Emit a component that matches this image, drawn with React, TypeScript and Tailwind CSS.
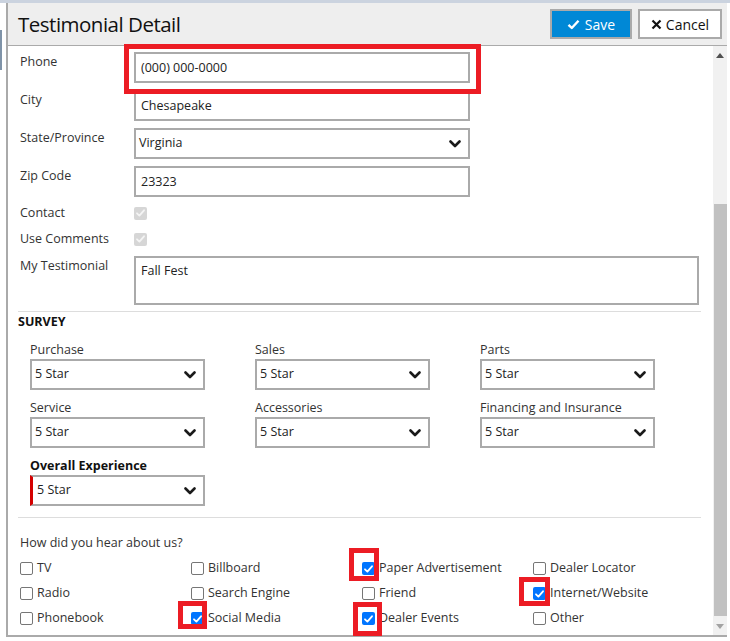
import React from "react";

const font = { fontFamily: '"Open Sans", "Noto Sans", sans-serif' };

function Chevron() {
  return (
    <svg width="12" height="8" viewBox="0 0 12 8" className="shrink-0">
      <path d="M1.5 1.5 L6 6 L10.5 1.5" fill="none" stroke="#1a1a1a" strokeWidth="2.6" strokeLinecap="round" strokeLinejoin="round" />
    </svg>
  );
}

function Check({ color = "white" }: { color?: string }) {
  return (
    <svg width="9" height="8" viewBox="0 0 9 8">
      <path d="M1 4.3 L3.4 6.6 L8 1.3" fill="none" stroke={color} strokeWidth="1.8" strokeLinecap="round" strokeLinejoin="round" />
    </svg>
  );
}

function Box({ checked }: { checked?: boolean }) {
  if (checked)
    return (
      <span className="w-[13px] h-[13px] rounded-[2px] bg-[#0075ff] flex items-center justify-center shrink-0">
        <Check />
      </span>
    );
  return <span className="w-[13px] h-[13px] rounded-[2px] border border-[#767676] bg-white shrink-0" />;
}

function DisabledBox() {
  return (
    <span className="w-[13px] h-[13px] rounded-[2px] bg-[#d6d6d6] flex items-center justify-center">
      <Check color="#f4f4f4" />
    </span>
  );
}

function Field({ label, children }: { label: string; children: React.ReactNode }) {
  return (
    <div className="flex items-start mb-[7px]">
      <div className="w-[114px] pt-[1px] text-[12.5px] text-[#333] leading-[18px]">{label}</div>
      {children}
    </div>
  );
}

function Input({ value, w = 336 }: { value: string; w?: number }) {
  return (
    <div className="h-[31px] border-2 border-[#aaa] flex items-center px-[5px] pt-[1px] text-[12.5px] text-[#222]" style={{ width: w }}>
      {value}
    </div>
  );
}

function Select({ value, w = 175, red }: { value: string; w?: number; red?: boolean }) {
  return (
    <div
      className={`h-[31px] border-2 border-[#aaa] flex items-center justify-between pr-[7px] text-[12.5px] text-[#222] ${red ? "border-l-[3px] border-l-[#d40000] pl-[4px]" : "pl-[3px]"}`}
      style={{ width: w }}
    >
      <span>{value}</span>
      <Chevron />
    </div>
  );
}

function SurveyItem({ label, bold, red }: { label: string; bold?: boolean; red?: boolean }) {
  return (
    <div className="w-[175px]">
      <div className={`text-[12.5px] leading-[19px] ${bold ? "font-bold text-[#111]" : "text-[#333]"}`}>{label}</div>
      <Select value="5 Star" red={red} />
    </div>
  );
}

const hear: [string, boolean][][] = [
  [["TV", false], ["Billboard", false], ["Paper Advertisement", true], ["Dealer Locator", false]],
  [["Radio", false], ["Search Engine", false], ["Friend", false], ["Internet/Website", true]],
  [["Phonebook", false], ["Social Media", true], ["Dealer Events", true], ["Other", false]],
];

export default function App() {
  return (
    <div className="w-[730px] h-[641px] bg-white relative overflow-hidden" style={font}>
      <div className="h-[3px] bg-[#cbd3df]" />
      <div className="absolute left-0 top-[30px] w-[2px] h-[40px] bg-[#7f93a8]" />
      <div className="ml-[6px] w-[721px] h-[634px] border-l-2 border-b-2 border-[#aaa] flex flex-col">
        {/* header */}
        <div className="h-[43px] bg-[#eeeeee] border-b border-[#aaa] flex items-center justify-between pl-[10px] pr-[5px] shrink-0">
          <div className="text-[20.5px] tracking-[-0.5px] text-[#111] leading-none">Testimonial Detail</div>
          <div className="flex gap-[6px]">
            <button className="w-[82px] h-[30px] bg-[#0088d6] border-2 border-[#aaa] text-white text-[14px] flex items-center justify-center gap-[5px]">
              <svg width="13" height="11" viewBox="0 0 13 11">
                <path d="M1.5 5.8 L4.8 9 L11.5 1.8" fill="none" stroke="white" strokeWidth="2.4" strokeLinejoin="round" />
              </svg>
              Save
            </button>
            <button className="w-[84px] h-[30px] bg-white border-2 border-[#aaa] text-[#111] text-[14px] flex items-center justify-center gap-[4px]">
              <svg width="11" height="11" viewBox="0 0 11 11">
                <path d="M1.5 1.5 L9.5 9.5 M9.5 1.5 L1.5 9.5" stroke="#111" strokeWidth="2.2" />
              </svg>
              Cancel
            </button>
          </div>
        </div>

        {/* body */}
        <div className="flex-1 flex min-h-0">
          <div className="flex-1 relative">
            <div className="pl-[12px] pt-[6px]">
              <Field label="Phone"><Input value="(000) 000-0000" /></Field>
              <Field label="City"><Input value="Chesapeake" /></Field>
              <Field label="State/Province"><Select value="Virginia" w={336} /></Field>
              <div className="flex items-start">
                <div className="w-[114px] pt-[1px] text-[12.5px] text-[#333] leading-[18px]">Zip Code</div>
                <Input value="23323" />
              </div>
              <div className="flex items-center h-[26px] mt-[3px]">
                <div className="w-[114px] text-[12.5px] text-[#333]">Contact</div>
                <DisabledBox />
              </div>
              <div className="flex items-center h-[26px]">
                <div className="w-[114px] text-[12.5px] text-[#333]">Use Comments</div>
                <DisabledBox />
              </div>
              <div className="flex items-start mt-[4px]">
                <div className="w-[114px] pt-[1px] text-[12.5px] text-[#333] leading-[18px]">My Testimonial</div>
                <div className="w-[565px] h-[49px] border-2 border-[#aaa] px-[5px] pt-[4px] text-[12.5px] text-[#222]">Fall Fest</div>
              </div>
            </div>

            <div className="ml-[10px] mr-[12px] mt-[6px] h-px bg-[#ddd]" />
            <div className="pl-[10px] text-[12.5px] font-bold text-[#111] leading-[18px] mt-[1px]">SURVEY</div>

            <div className="pl-[22px] mt-[9px] flex flex-col gap-[8px]">
              <div className="flex gap-[50px]">
                <SurveyItem label="Purchase" />
                <SurveyItem label="Sales" />
                <SurveyItem label="Parts" />
              </div>
              <div className="flex gap-[50px]">
                <SurveyItem label="Service" />
                <SurveyItem label="Accessories" />
                <SurveyItem label="Financing and Insurance" />
              </div>
              <div className="flex">
                <SurveyItem label="Overall Experience" bold red />
              </div>
            </div>

            <div className="ml-[10px] mr-[12px] mt-[11px] h-px bg-[#ddd]" />
            <div className="pl-[12px] mt-[16px] text-[12.5px] text-[#333] leading-[18px]">How did you hear about us?</div>
            <div className="pl-[12px] mt-[4px]">
              {hear.map((row, i) => (
                <div key={i} className="flex h-[25px] items-center">
                  {row.map(([l, c]) => (
                    <div key={l} className="w-[171px] flex items-center gap-[4px] text-[12.5px] text-[#333]">
                      <Box checked={c} />
                      <span>{l}</span>
                    </div>
                  ))}
                </div>
              ))}
            </div>
          </div>

          {/* scrollbar */}
          <div className="w-[14px] bg-[#f1f1f1] flex flex-col items-center shrink-0">
            <div className="h-[17px] flex items-center justify-center pt-[2px]">
              <svg width="8" height="5" viewBox="0 0 8 5"><path d="M0 5 L4 0 L8 5 Z" fill="#505050" /></svg>
            </div>
            <div className="flex-1 w-full flex flex-col">
              <div className="h-[141px]" />
              <div className="w-[13px] ml-[1px] h-[412px] bg-[#c1c1c1]" />
            </div>
            <div className="h-[17px] flex items-center justify-center">
              <svg width="8" height="5" viewBox="0 0 8 5"><path d="M0 0 L8 0 L4 5 Z" fill="#a3a3a3" /></svg>
            </div>
          </div>
        </div>
      </div>

      {/* red highlight boxes */}
      <div className="absolute left-[124px] top-[44px] w-[357px] h-[50px] border-[5px] border-[#ec1c24]" />
      <div className="absolute left-[349px] top-[548px] w-[30px] h-[33px] border-[5px] border-[#ec1c24]" />
      <div className="absolute left-[519px] top-[577px] w-[31px] h-[29px] border-[5px] border-[#ec1c24]" />
      <div className="absolute left-[178px] top-[601px] w-[29px] h-[28px] border-[5px] border-[#ec1c24]" />
      <div className="absolute left-[353px] top-[602px] w-[29px] h-[34px] border-[5px] border-[#ec1c24]" />
    </div>
  );
}
